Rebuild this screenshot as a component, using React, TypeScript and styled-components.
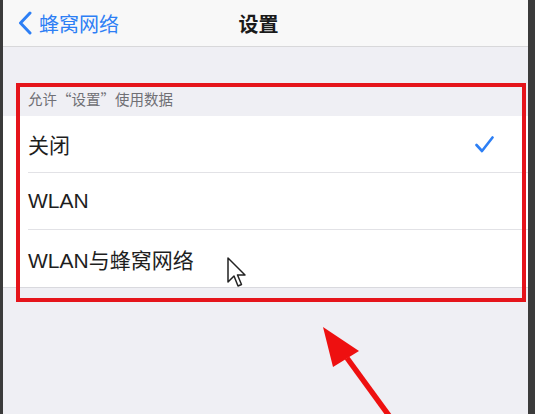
import React from "react"
import styled, { createGlobalStyle } from "styled-components"

const GlobalStyle = createGlobalStyle`
  html, body {
    margin: 0;
    padding: 0;
    background: #3d3d3d;
  }
  body {
    font-family: "Liberation Sans", "Noto Sans CJK SC", sans-serif;
  }
`

const Frame = styled.div`
  display: flex;
  width: 535px;
  height: 414px;
  overflow: hidden;
`

const Edge = styled.div<{ $w: number }>`
  width: ${(p) => p.$w}px;
  flex-shrink: 0;
  background: #3b3b3b;
`

const Screen = styled.div`
  flex: 1;
  display: flex;
  flex-direction: column;
  background: #efeff4;
  position: relative;
`

const NavBar = styled.div`
  height: 46px;
  flex-shrink: 0;
  display: grid;
  grid-template-columns: 1fr auto 1fr;
  align-items: center;
  padding-right: 14px;
  background: #f8f8f8;
  border-bottom: 1px solid #d8d8da;
`

const BackButton = styled.div`
  display: flex;
  align-items: center;
  gap: 7px;
  padding-left: 15px;
  color: #2d7ff5;
  font-size: 20px;
  font-family: "Noto Sans CJK SC", sans-serif;
`

const Title = styled.div`
  font-size: 20px;
  font-weight: 600;
  color: #1a1a1a;
  font-family: "Noto Sans CJK SC", sans-serif;
`

const Content = styled.div`
  flex: 1;
  padding-top: 36px;
  position: relative;
`

const SectionHeader = styled.div`
  height: 33px;
  box-sizing: border-box;
  display: flex;
  align-items: flex-end;
  padding: 0 0 7px 25px;
  font-size: 14.5px;
  color: #707075;
  font-family: "Noto Sans CJK SC", sans-serif;
`

const List = styled.div`
  background: #ffffff;
  border-bottom: 1px solid #d9d9de;
`

const Row = styled.div<{ $last?: boolean }>`
  height: 57px;
  margin-left: 25px;
  padding-right: 34px;
  display: flex;
  align-items: center;
  justify-content: space-between;
  box-sizing: border-box;
  border-bottom: ${(p) => (p.$last ? "none" : "1px solid #e2e2e6")};
  font-size: 21px;
  color: #1e1e1e;
`

const Highlight = styled.div`
  position: absolute;
  left: 13px;
  top: 36px;
  width: 510px;
  height: 219px;
  box-sizing: border-box;
  border: 4px solid #e5141b;
  pointer-events: none;
`

const Overlay = styled.svg`
  position: absolute;
  pointer-events: none;
`

const options = ["关闭", "WLAN", "WLAN与蜂窝网络"]

export default function App() {
  return (
    <>
      <GlobalStyle />
      <Frame>
        <Edge $w={3} />
        <Screen>
          <NavBar>
            <BackButton>
              <svg width="14" height="24" viewBox="0 0 14 24">
                <path
                  d="M12 2 L2.5 12 L12 22"
                  fill="none"
                  stroke="#2d7ff5"
                  strokeWidth="3"
                  strokeLinecap="round"
                  strokeLinejoin="round"
                />
              </svg>
              蜂窝网络
            </BackButton>
            <Title>设置</Title>
            <div />
          </NavBar>
          <Content>
            <SectionHeader>允许“设置”使用数据</SectionHeader>
            <List>
              {options.map((label, i) => (
                <Row key={label} $last={i === options.length - 1}>
                  <span>{label}</span>
                  {i === 0 && (
                    <svg width="19" height="19" viewBox="0 0 19 19">
                      <path
                        d="M1.5 10 L7 16 L17.5 2.5"
                        fill="none"
                        stroke="#2d7ff5"
                        strokeWidth="2.6"
                        strokeLinecap="round"
                        strokeLinejoin="round"
                      />
                    </svg>
                  )}
                </Row>
              ))}
            </List>
            <Highlight />
            {/* mouse cursor */}
            <Overlay
              width="20"
              height="32"
              viewBox="0 0 20 32"
              style={{ left: 224, top: 210 }}
            >
              <path
                d="M1 1 L1 25 L7 19 L11 29 L14.5 27.5 L10.5 18 L18 18 Z"
                fill="#ffffff"
                stroke="#222"
                strokeWidth="1.5"
                strokeLinejoin="round"
              />
            </Overlay>
            {/* annotation arrow */}
            <Overlay
              width="90"
              height="100"
              viewBox="0 0 90 100"
              style={{ left: 310, top: 275 }}
            >
              <line
                x1="34"
                y1="36"
                x2="77"
                y2="95"
                stroke="#ee1010"
                strokeWidth="5.5"
              />
              <polygon points="10,5 46,29 20,45" fill="#ee1010" />
            </Overlay>
          </Content>
        </Screen>
        <Edge $w={7} />
      </Frame>
    </>
  )
}
